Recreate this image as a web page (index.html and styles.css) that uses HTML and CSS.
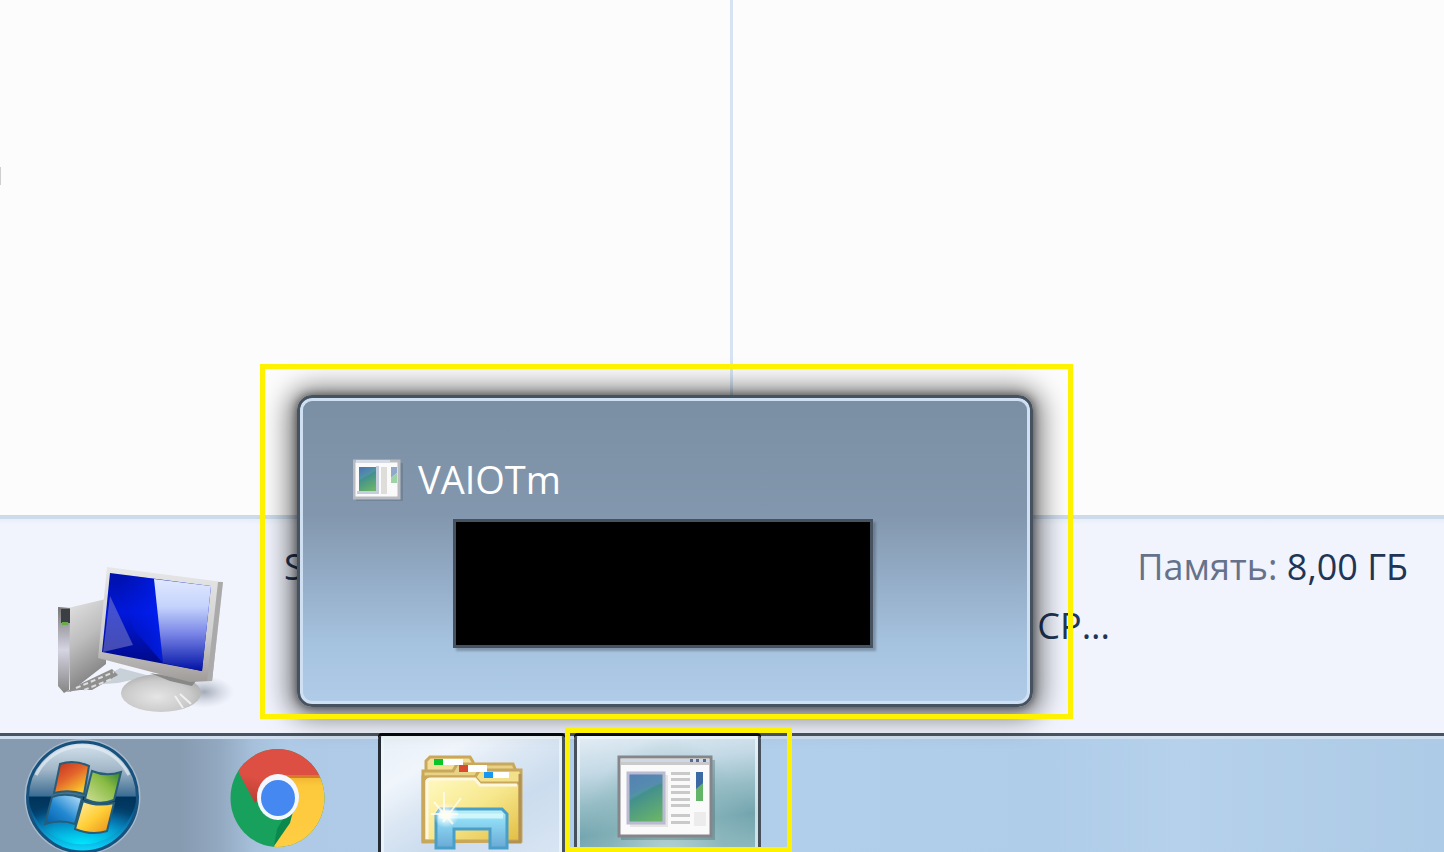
FILE: index.html
```html
<!DOCTYPE html>
<html lang="ru">
<head>
<meta charset="utf-8">
<title>VAIOTm</title>
<link rel="stylesheet" href="styles.css">
</head>
<body>
<div class="desktop">
  <main class="panes">
    <section class="pane pane-list"><span class="list-edge"></span></section>
    <section class="pane"></section>
  </main>

  <section class="details">
    <svg class="computer" viewBox="55 562 180 154" aria-hidden="true">
      <defs>
        <linearGradient id="tower" x1="0" y1="0" x2=".3" y2="1"><stop offset="0" stop-color="#e4e4e4"/><stop offset=".5" stop-color="#bdbdbd"/><stop offset="1" stop-color="#808080"/></linearGradient>
        <linearGradient id="front" x1="0" y1="0" x2="0" y2="1"><stop offset="0" stop-color="#777"/><stop offset=".5" stop-color="#d5d4e2"/><stop offset="1" stop-color="#858585"/></linearGradient>
        <linearGradient id="screen" x1="0" y1="0" x2="0" y2="1"><stop offset="0" stop-color="#0010a8"/><stop offset=".4" stop-color="#0018dc"/><stop offset="1" stop-color="#00077d"/></linearGradient>
        <linearGradient id="bright" x1="0" y1="0" x2="1" y2="0"><stop offset="0" stop-color="#0019e8" stop-opacity="0"/><stop offset="1" stop-color="#0024fc"/></linearGradient>
        <linearGradient id="glare" x1="0" y1="0" x2="0" y2="1"><stop offset="0" stop-color="#e0e8ff"/><stop offset=".3" stop-color="#c4d3fc"/><stop offset=".6" stop-color="#7884e6"/><stop offset="1" stop-color="#0011a5"/></linearGradient>
        <linearGradient id="bezel" x1="0" y1="0" x2="0" y2="1"><stop offset="0" stop-color="#e7e7e7"/><stop offset=".6" stop-color="#cfcfcf"/><stop offset="1" stop-color="#9f9b99"/></linearGradient>
        <radialGradient id="stand" cx=".45" cy=".6" r=".6"><stop offset="0" stop-color="#e5e5e5"/><stop offset=".7" stop-color="#cacaca"/><stop offset="1" stop-color="#b0b0b0"/></radialGradient>
        <radialGradient id="cast"><stop offset="0" stop-color="#8f98a5" stop-opacity=".8"/><stop offset="1" stop-color="#b5bcc8" stop-opacity="0"/></radialGradient>
      </defs>
      <ellipse cx="204" cy="692" rx="30" ry="16" fill="url(#cast)"/>
      <path d="M92 685 120 668 150 676 118 683Z" fill="#c9d1d8"/>
      <path d="M68 608 106 599 106 664 70 692Z" fill="url(#tower)"/>
      <path d="M58 607 70 608 69 690 64 693 58 686Z" fill="url(#front)"/>
      <path d="M61 609h9v14h-9z" fill="#3b3f43"/>
      <path d="M62 622h6v3h-6z" fill="#65ad46"/>
      <path d="M66 692 76 686 112 669 118 675 92 690 80 690Z" fill="#8f8f8f"/>
      <path d="m76 688 38-16m-30 18 30-12" stroke="#dedede" stroke-width="2" stroke-dasharray="5 3"/>
      <ellipse cx="161" cy="693" rx="40" ry="19" fill="url(#stand)"/>
      <path d="M150 673 196 681 192 686 170 681Z" fill="#888"/>
      <path d="m175 696 8 12m-3-14 11 10" stroke="#f0f0f0" stroke-width="2"/>
      <path d="M107 567 223 582 212 681 190 682 98 658Z" fill="url(#bezel)"/>
      <path d="M223 582 212 681 207 681 218 582Z" fill="#aaa"/>
      <path d="M110 573 211 586 202 671 102 652Z" fill="url(#screen)"/>
      <path d="M118 574 155 579 163 663 134 630Z" fill="url(#bright)" opacity=".7"/>
      <path d="M110 596 133 645 103 652Z" fill="#7a7fc5" opacity=".55"/>
      <path d="M154 579 211 586 202 671 163 663Z" fill="url(#glare)"/>
    </svg>
    <div class="facts">
      <div class="fact-row"><span>S</span><span><span class="label">Память:</span> 8,00 ГБ</span></div>
      <div class="fact-row cpu"><span>CP...</span></div>
    </div>
  </section>

  <nav class="taskbar">
    <button class="start" aria-label="Пуск">
      <svg viewBox="22 739 120 113" aria-hidden="true">
        <defs>
          <linearGradient id="orb" x1="0" y1="0" x2="0" y2="1"><stop offset="0" stop-color="#d8e5ef"/><stop offset=".25" stop-color="#a2b7c8"/><stop offset=".49" stop-color="#3c6d92"/><stop offset=".5" stop-color="#013f6c"/><stop offset=".75" stop-color="#0878b4"/><stop offset="1" stop-color="#0bdcff"/></linearGradient>
          <radialGradient id="orbShade" cx=".5" cy=".65" r=".57"><stop offset=".45" stop-color="#002d55" stop-opacity="0"/><stop offset="1" stop-color="#002c50" stop-opacity=".65"/></radialGradient>
          <radialGradient id="orbGlow" cx=".5" cy="1" r=".75"><stop offset="0" stop-color="#00eaff"/><stop offset="1" stop-color="#0090d0" stop-opacity="0"/></radialGradient>
          <linearGradient id="flagR" x1="0" y1="0" x2=".7" y2="1"><stop offset="0" stop-color="#bf2c20"/><stop offset=".5" stop-color="#e2632b"/><stop offset="1" stop-color="#fcce2d"/></linearGradient>
          <linearGradient id="flagG" x1="0" y1="1" x2="1" y2="0"><stop offset="0" stop-color="#d2e09b"/><stop offset=".6" stop-color="#89bb43"/><stop offset="1" stop-color="#2c7c34"/></linearGradient>
          <linearGradient id="flagB" x1="0" y1="1" x2="1" y2="0"><stop offset="0" stop-color="#005da7"/><stop offset=".45" stop-color="#2389d1"/><stop offset="1" stop-color="#c1e5ff"/></linearGradient>
          <linearGradient id="flagY" x1="0" y1="0" x2="1" y2="1"><stop offset="0" stop-color="#fff0b0"/><stop offset=".5" stop-color="#ffcf38"/><stop offset="1" stop-color="#e88a16"/></linearGradient>
        </defs>
        <circle cx="82.500" cy="797" r="58" fill="#a8bacb"/>
        <circle cx="82.500" cy="797" r="55" fill="url(#orb)"/>
        <path d="M28 797h109a55 55 0 0 1-109 0Z" fill="url(#orbShade)"/>
        <path d="M28 797h109a55 55 0 0 1-109 0Z" fill="url(#orbGlow)"/>
        <circle cx="82.500" cy="797" r="55" fill="none" stroke="#17517e" stroke-width="3"/>
        <path d="M36 775a52 52 0 0 1 93 0" fill="none" stroke="#e3edf4" stroke-width="3" opacity=".7"/>
        <g stroke="#285d78" stroke-width="2">
          <path d="M60 764q14-5 29 2l-5 28q-15-5-30-1Z" fill="url(#flagR)"/>
          <path d="M92 771q14 6 29 1l-7 28q-15 6-29-1Z" fill="url(#flagG)"/>
          <path d="M52 797q14-5 30 1l-7 26q-14-5-30 0Z" fill="url(#flagB)"/>
          <path d="M83 801q14 6 31 2l-7 28q-15 5-32-2Z" fill="url(#flagY)"/>
        </g>
      </svg>
    </button>

    <button class="chrome" aria-label="Google Chrome">
      <svg viewBox="229 748 97 100" aria-hidden="true">
        <defs>
          <clipPath id="disc"><ellipse cx="277.500" cy="798" rx="47" ry="49"/></clipPath>
          <linearGradient id="redFade" x1=".4" y1="0" x2="0" y2="1"><stop offset=".5" stop-color="#dd4f43"/><stop offset="1" stop-color="#b53932"/></linearGradient>
          <linearGradient id="yellowFade" x1="0" y1="0" x2="0" y2="1"><stop offset="0" stop-color="#eeb22e"/><stop offset=".15" stop-color="#fdc93c"/><stop offset="1" stop-color="#ffcd43"/></linearGradient>
        </defs>
        <g clip-path="url(#disc)">
          <path d="M229 748h97v100h-97z" fill="#18a05d"/>
          <path d="M277 775h49v73h-51l-1-2 22-38Z" fill="url(#yellowFade)"/>
          <path d="m293 811-3 12-16 23 3-17 11-18Z" fill="#0b884b"/>
          <path d="M240 775 230 748h96v27h-49l-22 28Z" fill="url(#redFade)"/>
          <path d="M284 775h40v3h-40z" fill="#d77b2a"/>
        </g>
        <ellipse cx="278" cy="797" rx="21" ry="23" fill="#f4f7fd"/>
        <ellipse cx="278" cy="798" rx="17" ry="18" fill="#4688f2"/>
      </svg>
    </button>

    <button class="task explorer" aria-label="Проводник">
      <svg viewBox="420 752 106 100" aria-hidden="true">
        <defs>
          <linearGradient id="folder" x1="0" y1="0" x2="1" y2="1"><stop offset="0" stop-color="#fffac4"/><stop offset=".5" stop-color="#f7e88e"/><stop offset="1" stop-color="#e2bd42"/></linearGradient>
          <linearGradient id="tray" x1="0" y1="0" x2="0" y2="1"><stop offset="0" stop-color="#c5f2f5"/><stop offset=".3" stop-color="#8edaf4"/><stop offset="1" stop-color="#6aa9d5"/></linearGradient>
          <radialGradient id="shine"><stop offset="0" stop-color="#fff"/><stop offset=".35" stop-color="#fff" stop-opacity=".8"/><stop offset="1" stop-color="#fff" stop-opacity="0"/></radialGradient>
        </defs>
        <g stroke="#c9a75b" stroke-width="3">
          <path d="M427 785v-24l4-4h40l3 5v23Z" fill="#f2df96"/>
          <path d="M424 842V771h30l4-7h56l3 7v70Z" fill="#e8d285"/>
          <path d="M424 841V777h52l4-6 5-1h37v71Z" fill="#f3e08b"/>
          <path d="M425 841V780q1-3 5-3h46l5 6h40v58Z" fill="url(#folder)"/>
        </g>
        <path d="M428 839V782q0-3 4-3h44l5 6h37" fill="none" stroke="#fff8df" stroke-width="3"/>
        <path d="M521 774v68h-31" fill="none" stroke="#b29252" stroke-width="3"/>
        <path d="M444 759h20v6h-20zM469 765h19v7h-19zM494 772h16v6h-16z" fill="#fff"/>
        <path d="M435 759h9v6h-9z" fill="#08c62a"/>
        <path d="M460 765h9v7h-9z" fill="#d84b2f"/>
        <path d="M485 772h9v6h-9z" fill="#1697f2"/>
        <path d="M437 848V815l4-6h62l5 5v34h-17v-19h-36v19Z" fill="url(#tray)" stroke="#489fca" stroke-width="3"/>
        <path d="M440 816h64" stroke="#e3ffff" stroke-width="5" opacity=".7"/>
        <circle cx="447" cy="815" r="13" fill="url(#shine)"/>
        <path d="M445 792v30m-13-8h27m-24-12 19 22m8-26-18 24" stroke="#fffdf0" stroke-width="2" opacity=".8"/>
      </svg>
    </button>

    <div class="marked-task">
      <button class="task app" aria-label="VAIOTm">
        <svg viewBox="613 754 108 88" aria-hidden="true">
          <defs>
            <linearGradient id="pic" x1=".3" y1="0" x2=".7" y2="1"><stop offset="0" stop-color="#4b79b0"/><stop offset=".35" stop-color="#5293a5"/><stop offset=".4" stop-color="#43908d"/><stop offset="1" stop-color="#69b468"/></linearGradient>
          </defs>
          <path d="M620 760h94v80h-94z" fill="#315b63" opacity=".3"/>
          <path d="M618 757h92v79h-92z" fill="#fafafa" stroke="#85868a" stroke-width="3"/>
          <path d="M620 759h88v3h-88z" fill="#cfd8e4"/>
          <path d="M620 762h88v3h-88z" fill="#c9c9c9"/>
          <path d="M689 759h3v3h-3zM695 759h3v3h-3zM702 759h3v3h-3z" fill="#536a94"/>
          <path d="M629 775h38v52h-38z" fill="#e5e5e3"/>
          <path d="M627 773h36v50h-36z" fill="url(#pic)" stroke="#babad2" stroke-width="3"/>
          <path d="M629 794q13-8 32-10v-9h-32Z" fill="#5989b4" opacity=".65"/>
          <path d="M670 773.500h19m-19 6h19m-19 7h19m-19 6h19m-19 7h19m-19 6h19m-19 10h19m-19 7h19" stroke="#c9c9c9" stroke-width="3"/>
          <path d="M695 772h7v29h-7z" fill="#63b468"/>
          <path d="M695 772h7v11l-7 6z" fill="#3b69a4"/>
          <path d="M693 812h12v14h-12z" fill="#ececec"/>
        </svg>
      </button>
      <span class="mark task-mark"></span>
    </div>
  </nav>

  <div class="preview-area">
    <section class="preview">
      <header class="preview-head">
        <svg class="small-icon" viewBox="353 459 50 42" aria-hidden="true">
          <path d="M356 463h47v38h-47z" fill="#4f6579" opacity=".35"/>
          <path d="M354 461h45v37h-45z" fill="#fafafa" stroke="#b9bbc0" stroke-width="3"/>
          <path d="M356 460h34v3h-34z" fill="#d5dae5"/>
          <path d="M359 467h17v24h-17z" fill="url(#pic)"/>
          <path d="M376 466h3v28h-22v-3h19z" fill="#c6cedd"/>
          <path d="M381 467h6v27h-6z" fill="#deddda"/>
          <path d="M391 467h6v6l-6 5z" fill="#91a9c9"/>
          <path d="m391 478 6-5v10h-6z" fill="#9ed3a4"/>
        </svg>
        <span>VAIOTm</span>
      </header>
      <div class="thumbnail"></div>
    </section>
    <span class="mark preview-mark"></span>
  </div>
</div>
</body>
</html>
```
FILE: styles.css
```css
* {
  box-sizing: border-box;
}

body {
  margin: 0;
  font-family: "Open Sans", "Noto Sans", sans-serif;
  font-size: 36px;
  color: #1f3555;
}

button {
  padding: 0;
  border: 0;
  background: none;
}

svg {
  display: block;
}

.desktop {
  position: relative;
  display: flex;
  flex-direction: column;
  min-height: 100vh;
  overflow: hidden;
  background: #fcfcfc;
}

.panes {
  flex: 1;
  display: flex;
}

.pane {
  flex: 1;
}

.pane-list {
  flex: 0 0 733px;
  border-right: 3px solid #d5e3f2;
  padding-top: 167px;
}

.list-edge {
  display: block;
  width: 1px;
  height: 18px;
  background: #cfcfcf;
}

.details {
  display: flex;
  align-items: flex-start;
  gap: 49px;
  padding: 18px 36px 0 55px;
  height: 218px;
  border-top: 4px solid #ccdaea;
  background: linear-gradient(#e6eef7, #f1f4fd 6px);
}

.computer {
  width: 180px;
  height: 154px;
  margin-top: 25px;
}

.facts {
  flex: 1;
}

.fact-row {
  display: flex;
  justify-content: space-between;
  line-height: 59px;
  white-space: pre;
}

.cpu {
  justify-content: flex-end;
  padding-right: 298px;
}

.label {
  color: #66718a;
}

.taskbar {
  display: flex;
  height: 119px;
  border-top: 3px solid #48535f;
  background:
    linear-gradient(#cfdff0, #cfdff0) top / 100% 3px no-repeat,
    linear-gradient(90deg, #869bb0 180px, #93a9c1 220px, #a7c1dc 255px, #aecae6 290px, #b1cfeb 800px, #afcce9 1050px, #b5d1eb 1180px, #adcae6);
}

.start {
  width: 120px;
  margin-left: 22px;
  padding-top: 3px;
}

.chrome {
  width: 97px;
  margin-left: 87px;
  padding-top: 12px;
}

.start,
.chrome,
.task {
  display: flex;
  align-items: flex-start;
}

.start svg,
.chrome svg {
  width: 100%;
}

.task {
  position: relative;
  justify-content: center;
  width: 187px;
  height: 116px;
  border: solid #46515d;
  border-width: 0 3px;
  border-radius: 4px 4px 0 0;
  box-shadow: 0 -3px #08090c;
}

.task::after {
  content: "";
  position: absolute;
  inset: 0;
  border: solid rgba(240, 248, 250, .7);
  border-width: 3px 3px 0;
}

.explorer {
  margin-left: 52px;
  padding-top: 16px;
  background: linear-gradient(150deg, #e8f0f9, #f0f5fb 25%, #dae6f3 45%, #cbdcee 65%, #d8e5f3);
  border-left-color: #252c36;
}

.explorer svg {
  width: 106px;
  height: 100px;
}

.marked-task {
  position: relative;
  z-index: 2;
  margin-left: 9px;
}

.app {
  padding-top: 18px;
  background:
    radial-gradient(ellipse at 50% 110%, #b8d4d3, rgba(145, 187, 192, .5) 45%, transparent 70%),
    linear-gradient(172deg, #e4edf5, #c3d9e5 28%, #96bdc6 50%, #74a5af 72%, #8fb9bf);
}

.app svg {
  width: 108px;
  height: 88px;
}

.mark {
  position: absolute;
  border: 5px solid #fff200;
}

.task-mark {
  inset: -8px -31px 0 -9px;
}

.preview-area {
  position: absolute;
  left: 260px;
  bottom: 133px;
  padding: 31px 40px 12px 37px;
}

.preview-mark {
  inset: 0;
}

.preview {
  width: 736px;
  height: 312px;
  padding: 50px 50px 0;
  border: 3px solid #46525f;
  border-radius: 15px;
  background: linear-gradient(#7b8fa4, #8297ad 38%, #91a8c2 55%, #a5c2de 80%, #b0cce9);
  box-shadow:
    inset 0 0 0 3px #cfe0f2,
    0 0 8px 1px rgba(0, 0, 0, .45),
    0 2px 26px 9px rgba(0, 0, 0, .5);
}

.preview-head {
  display: flex;
  align-items: center;
  gap: 15px;
  margin-left: 3px;
  height: 63px;
  line-height: 63px;
  font-size: 38px;
  color: #fff;
}

.small-icon {
  width: 50px;
  height: 42px;
}

.thumbnail {
  width: 420px;
  height: 129px;
  margin: 8px 0 0 103px;
  border: 3px solid #46525f;
  background: #000;
  box-shadow: 3px 3px 2px rgba(70, 82, 95, .4);
}
```
